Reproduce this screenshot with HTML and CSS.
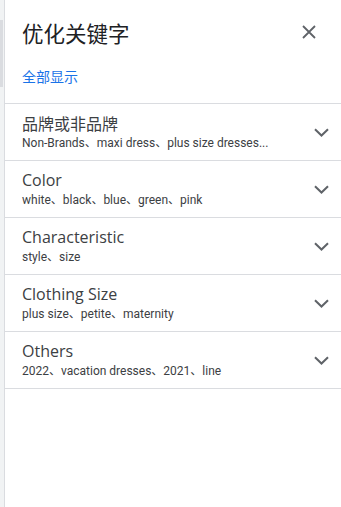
FILE: index.html
```html
<!DOCTYPE html>
<html lang="zh">
<head>
<meta charset="utf-8">
<link rel="stylesheet" href="styles.css">
</head>
<body>
<div class="page">
  <div class="rail"><div class="thumb"></div></div>
  <div class="panel">
    <div class="header">
      <h1 class="title">优化关键字</h1>
      <button class="close" aria-label="close">
        <svg width="14" height="14" viewBox="0 0 14 14"><path d="M1 1L13 13M13 1L1 13" stroke="#5f6368" stroke-width="1.8" fill="none"/></svg>
      </button>
    </div>
    <div class="showall">全部显示</div>
    <div class="list">
      <div class="row">
        <div class="text"><div class="name cjk">品牌或非品牌</div><div class="sub">Non-Brands、maxi dress、plus size dresses...</div></div>
        <svg class="chev" width="15" height="9" viewBox="0 0 15 9"><path d="M1 1.2L7.5 7.5L14 1.2" stroke="#5f6368" stroke-width="2" fill="none"/></svg>
      </div>
      <div class="row">
        <div class="text"><div class="name">Color</div><div class="sub">white、black、blue、green、pink</div></div>
        <svg class="chev" width="15" height="9" viewBox="0 0 15 9"><path d="M1 1.2L7.5 7.5L14 1.2" stroke="#5f6368" stroke-width="2" fill="none"/></svg>
      </div>
      <div class="row">
        <div class="text"><div class="name">Characteristic</div><div class="sub">style、size</div></div>
        <svg class="chev" width="15" height="9" viewBox="0 0 15 9"><path d="M1 1.2L7.5 7.5L14 1.2" stroke="#5f6368" stroke-width="2" fill="none"/></svg>
      </div>
      <div class="row">
        <div class="text"><div class="name">Clothing Size</div><div class="sub">plus size、petite、maternity</div></div>
        <svg class="chev" width="15" height="9" viewBox="0 0 15 9"><path d="M1 1.2L7.5 7.5L14 1.2" stroke="#5f6368" stroke-width="2" fill="none"/></svg>
      </div>
      <div class="row">
        <div class="text"><div class="name">Others</div><div class="sub">2022、vacation dresses、2021、line</div></div>
        <svg class="chev" width="15" height="9" viewBox="0 0 15 9"><path d="M1 1.2L7.5 7.5L14 1.2" stroke="#5f6368" stroke-width="2" fill="none"/></svg>
      </div>
    </div>
  </div>
</div>
</body>
</html>
```
FILE: styles.css
```css
html, body { margin: 0; padding: 0; background: #fff; }
body { font-family: Roboto, "Noto Sans CJK SC", sans-serif; }
.page { display: flex; height: 507px; }
.rail { width: 4px; background: #f1f3f4; border-right: 1px solid #dadce0; padding-top: 20px; box-sizing: content-box; }
.thumb { width: 3px; height: 67px; background: #dadce0; }
.panel { flex: 1; display: flex; flex-direction: column; }
.header { display: flex; align-items: center; justify-content: space-between; padding: 19px 20px 0 17px; height: 28px; }
.title { margin: 0; font-family: "Noto Sans CJK SC", sans-serif; font-weight: 400; font-size: 21.5px; color: #202124; line-height: 28px; }
.close { border: 0; background: none; padding: 0; width: 24px; height: 24px; display: flex; align-items: center; justify-content: center; margin-top: -2px; }
.showall { padding: 0 17px; margin-top: 21px; height: 35px; font-family: "Noto Sans CJK SC", sans-serif; font-size: 14px; line-height: 17px; color: #1a73e8; }
.list { border-top: 1px solid #dadce0; }
.row { display: flex; align-items: center; justify-content: space-between; height: 56px; border-bottom: 1px solid #dadce0; padding: 0 12px 0 17px; }
.text { display: flex; flex-direction: column; }
.name { font-family: "Open Sans", Roboto, sans-serif; font-size: 16px; line-height: 20px; color: #3c4043; }
.name.cjk { font-family: "Noto Sans CJK SC", sans-serif; }
.sub { font-size: 12px; line-height: 16px; color: #3c4043; margin-top: 2px; }
```
